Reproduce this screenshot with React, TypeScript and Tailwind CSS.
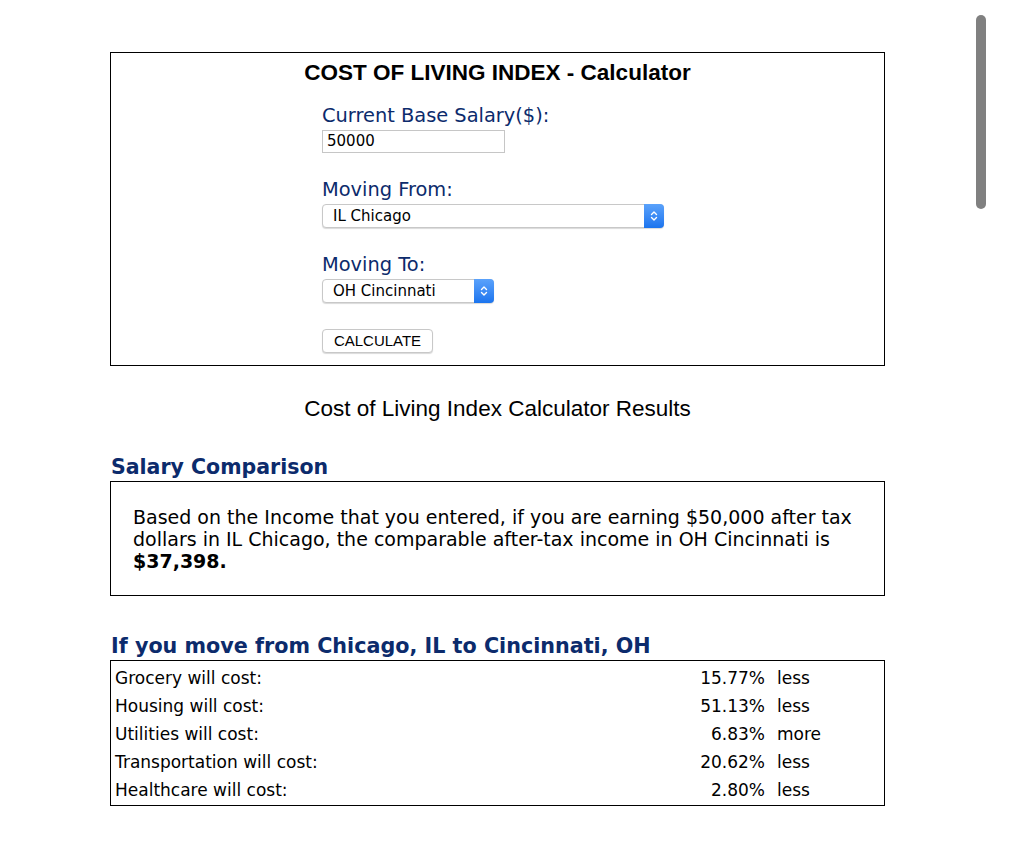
const verdana = { fontFamily: '"DejaVu Sans", Verdana, sans-serif' };
const arial = { fontFamily: '"Liberation Sans", Arial, sans-serif' };

const rows = [
  { label: "Grocery will cost:", pct: "15.77%", dir: "less" },
  { label: "Housing will cost:", pct: "51.13%", dir: "less" },
  { label: "Utilities will cost:", pct: "6.83%", dir: "more" },
  { label: "Transportation will cost:", pct: "20.62%", dir: "less" },
  { label: "Healthcare will cost:", pct: "2.80%", dir: "less" },
];

function Chevrons() {
  return (
    <svg width="8" height="12" viewBox="0 0 8 12" fill="none" stroke="white" strokeWidth="1.4" strokeLinecap="round" strokeLinejoin="round">
      <path d="M1.5 4.5 L4 2 L6.5 4.5" />
      <path d="M1.5 7.5 L4 10 L6.5 7.5" />
    </svg>
  );
}

function Select({ value, width }: { value: string; width: string }) {
  return (
    <div className={`flex h-[24px] ${width} items-center justify-between rounded-[4px] border border-[#c8c8c8] bg-white shadow-[0_1px_1px_rgba(0,0,0,0.15)]`}>
      <span className="pl-[10px] text-[15px] text-black" style={verdana}>{value}</span>
      <span className="-mr-px flex h-[24px] w-[20px] items-center justify-center rounded-r-[4px] bg-gradient-to-b from-[#5aa2fb] to-[#1a74ee]">
        <Chevrons />
      </span>
    </div>
  );
}

export default function App() {
  return (
    <div className="relative min-h-[851px] bg-white">
      {/* overlay scrollbar thumb */}
      <div className="absolute left-[976px] top-[15px] h-[194px] w-[10px] rounded-full bg-[#808080]" />

      <div className="ml-[110px] w-[775px] pt-[52px]" style={arial}>
        {/* calculator form */}
        <div className="h-[314px] border border-black">
          <h1 className="mt-[7px] text-center text-[22.5px] font-bold leading-[26px] text-black">
            COST OF LIVING INDEX - Calculator
          </h1>
          <div className="ml-[211px] mt-[18px] flex flex-col text-[#0c2b6c]" style={verdana}>
            <label className="text-[19.4px] leading-[24px]">Current Base Salary($):</label>
            <div className="mt-[2px] flex h-[23px] w-[183px] items-center border border-[#c6c6c6] pl-[4px] text-[15px] text-black">50000</div>

            <label className="mt-[25px] text-[19.4px] leading-[24px]">Moving From:</label>
            <div className="mt-[2px]"><Select value="IL Chicago" width="w-[342px]" /></div>

            <label className="mt-[25px] text-[19.4px] leading-[24px]">Moving To:</label>
            <div className="mt-[2px]"><Select value="OH Cincinnati" width="w-[172px]" /></div>

            <button className="mt-[26px] h-[24px] w-[111px] rounded-[4px] border border-[#c8c8c8] bg-white text-[15px] text-black shadow-[0_1px_1px_rgba(0,0,0,0.15)]" style={arial}>
              CALCULATE
            </button>
          </div>
        </div>

        <h2 className="mt-[30px] text-center text-[22.5px] leading-[26px] text-black">
          Cost of Living Index Calculator Results
        </h2>

        {/* salary comparison */}
        <h3 className="mt-[32px] pl-px text-[20.5px] font-bold leading-[26px] text-[#0c2b6c]" style={verdana}>
          Salary Comparison
        </h3>
        <div className="mt-px h-[115px] border border-black px-[22px] pt-[24px] text-[19px] leading-[22px] text-black" style={verdana}>
          Based on the Income that you entered, if you are earning $50,000 after tax dollars in IL Chicago, the comparable after-tax income in OH Cincinnati is <b>$37,398.</b>
        </div>

        {/* category breakdown */}
        <h3 className="mt-[37px] pl-px text-[20.7px] font-bold leading-[26px] text-[#0c2b6c]" style={verdana}>
          If you move from Chicago, IL to Cincinnati, OH
        </h3>
        <div className="mt-px border border-black pt-[4px] pb-0 text-[17px] text-black" style={verdana}>
          {rows.map((r) => (
            <div key={r.label} className="flex h-[28px] items-center">
              <span className="flex-1 pl-[4px]">{r.label}</span>
              <span className="w-[80px] text-right">{r.pct}</span>
              <span className="w-[119px] pl-[12px]">{r.dir}</span>
            </div>
          ))}
        </div>
      </div>
    </div>
  );
}
